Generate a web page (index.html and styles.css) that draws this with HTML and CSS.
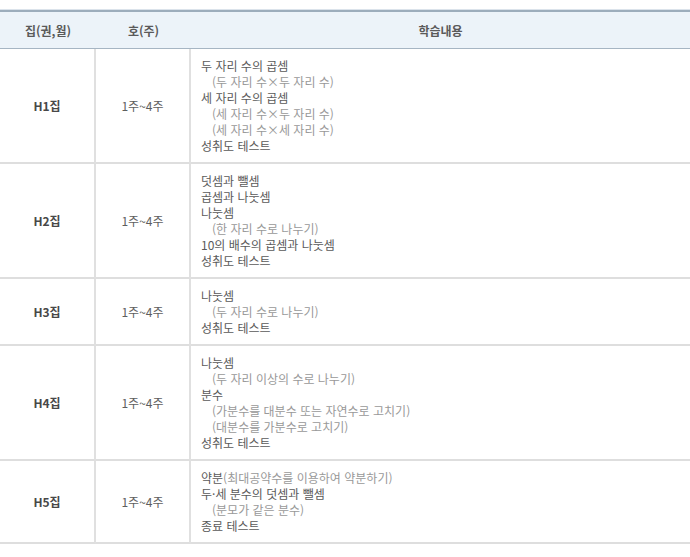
FILE: index.html
```html
<!DOCTYPE html>
<html lang="ko">
<head>
<meta charset="utf-8">
<title>학습내용</title>
<link rel="stylesheet" href="styles.css">
</head>
<body>
<table class="plan">
  <thead>
    <tr>
      <th class="c-set">집(권,월)</th>
      <th class="c-week">호(주)</th>
      <th class="c-body">학습내용</th>
    </tr>
  </thead>
  <tbody>
    <tr>
      <td class="c-set">H1집</td>
      <td class="c-week">1주~4주</td>
      <td class="c-body">
        <div class="m">두 자리 수의 곱셈</div>
        <div class="s">(두 자리 수×두 자리 수)</div>
        <div class="m">세 자리 수의 곱셈</div>
        <div class="s">(세 자리 수×두 자리 수)</div>
        <div class="s">(세 자리 수×세 자리 수)</div>
        <div class="m">성취도 테스트</div>
      </td>
    </tr>
    <tr>
      <td class="c-set">H2집</td>
      <td class="c-week">1주~4주</td>
      <td class="c-body">
        <div class="m">덧셈과 뺄셈</div>
        <div class="m">곱셈과 나눗셈</div>
        <div class="m">나눗셈</div>
        <div class="s">(한 자리 수로 나누기)</div>
        <div class="m">10의 배수의 곱셈과 나눗셈</div>
        <div class="m">성취도 테스트</div>
      </td>
    </tr>
    <tr>
      <td class="c-set">H3집</td>
      <td class="c-week">1주~4주</td>
      <td class="c-body">
        <div class="m">나눗셈</div>
        <div class="s">(두 자리 수로 나누기)</div>
        <div class="m">성취도 테스트</div>
      </td>
    </tr>
    <tr>
      <td class="c-set">H4집</td>
      <td class="c-week">1주~4주</td>
      <td class="c-body">
        <div class="m">나눗셈</div>
        <div class="s">(두 자리 이상의 수로 나누기)</div>
        <div class="m">분수</div>
        <div class="s">(가분수를 대분수 또는 자연수로 고치기)</div>
        <div class="s">(대분수를 가분수로 고치기)</div>
        <div class="m">성취도 테스트</div>
      </td>
    </tr>
    <tr class="last">
      <td class="c-set">H5집</td>
      <td class="c-week">1주~4주</td>
      <td class="c-body">
        <div class="m">약분<span class="lite">(최대공약수를 이용하여 약분하기)</span></div>
        <div class="m">두·세 분수의 덧셈과 뺄셈</div>
        <div class="s">(분모가 같은 분수)</div>
        <div class="m">종료 테스트</div>
      </td>
    </tr>
  </tbody>
</table>
</body>
</html>
```
FILE: styles.css
```css
html, body {
  margin: 0;
  padding: 0;
  background: #fff;
}
body {
  padding-top: 10px;
  font-family: "Noto Sans CJK KR", "Noto Sans", sans-serif;
  font-size: 12px;
  color: #5a5a5a;
}
.plan {
  width: 690px;
  border-collapse: separate;
  border-spacing: 0;
  table-layout: fixed;
}
.plan th,
.plan td {
  box-sizing: border-box;
}
.plan th {
  height: 39px;
  padding: 0;
  background: #ecf3f9;
  border-top: 2px solid #9cadbc;
  border-bottom: 1px solid #a6b5c3;
  box-shadow: 0 -1px 0 #dbe3eb;
  color: #5a5a5a;
  font-weight: bold;
  text-align: center;
  font-size: 12px;
}
.plan th.c-set { width: 96px; }
.plan th.c-week { width: 95px; }
.plan td {
  padding: 0;
  border-bottom: 2px solid #dedede;
  vertical-align: middle;
  text-align: center;
  line-height: 16px;
}
.plan td.c-set {
  font-weight: bold;
  color: #484848;
  border-right: 2px solid #e0e0e0;
}
.plan td.c-week {
  color: #5e5e5e;
  border-right: 2px solid #e0e0e0;
}
.plan td.c-body {
  text-align: left;
  padding: 9px 0 8px 10px;
}
.m {
  color: #5a5a5a;
  white-space: nowrap;
}
.s {
  color: #999;
  padding-left: 11px;
  white-space: nowrap;
}
.lite {
  color: #999;
}
```
